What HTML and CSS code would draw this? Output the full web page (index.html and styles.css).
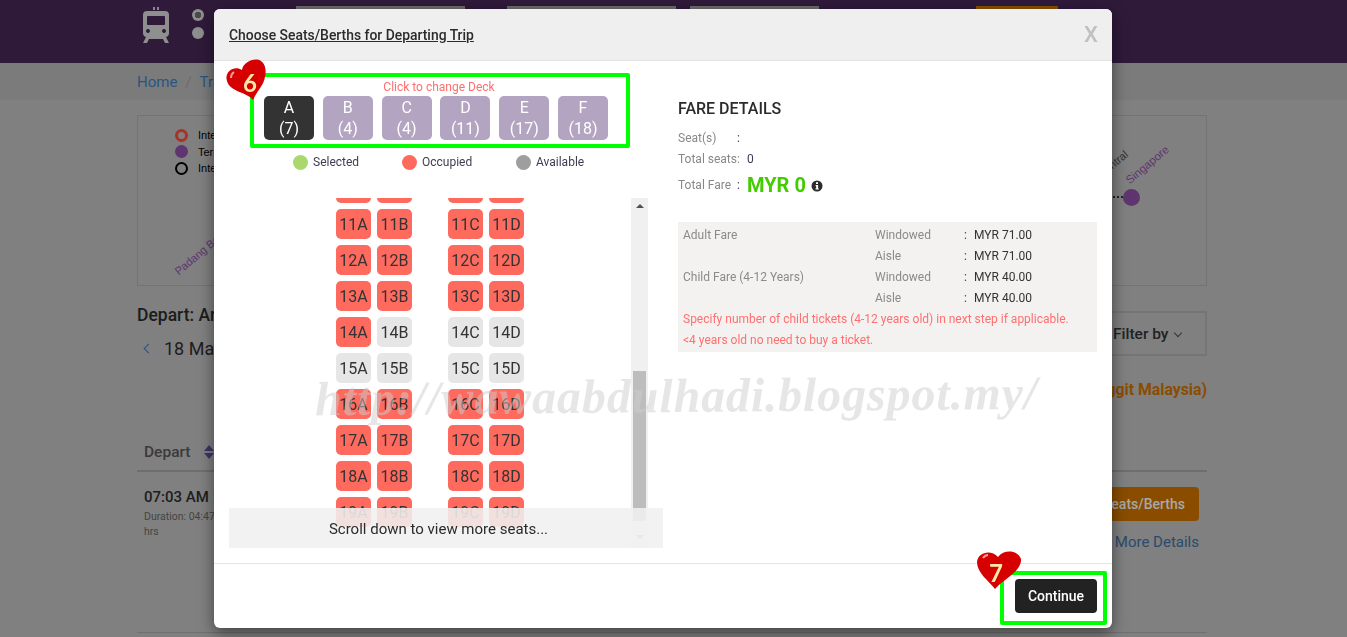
FILE: index.html
```html
<!DOCTYPE html>
<html lang="en">
<head>
<meta charset="utf-8">
<title>Choose Seats/Berths</title>
<link rel="stylesheet" href="styles.css">
</head>
<body>
<header class="topbar">
  <svg class="train" viewBox="0 0 30 38" width="30" height="38"><path d="M12 1h2v3h-2zM16 1h2v3h-2z" fill="#8a8a8a"/><path fill="#8f8f8f" fill-rule="evenodd" d="M6 5h18q4 0 4 4v18q0 3-3 4l3 6h-4l-2-4H8l-2 4H2l3-6q-3-1-3-4V9q0-4 4-4zm1 5q-1 0-1 1v7q0 1 1 1h16q1 0 1-1v-7q0-1-1-1zm0 13a2 2 0 1 0 .01 0zm16 0a2 2 0 1 0 .01 0z"/></svg>
  <div class="radios"><span class="radio radio-on"></span><span class="radio"></span></div>
  <span class="field field-a"></span>
  <span class="field field-b"></span>
  <span class="field field-c"></span>
  <span class="field field-go"></span>
</header>
<nav class="crumbs"><a>Home</a><i>/</i><a>Trains</a></nav>
<main class="page">
  <section class="map">
    <ul class="map-legend">
      <li><span class="mk mk-red"></span>Interchange</li>
      <li><span class="mk mk-purple"></span>Terminal</li>
      <li><span class="mk mk-black"></span>Intermediate</li>
    </ul>
    <span class="stn stn-padang">Padang Besar</span>
    <span class="stn stn-central">Central</span>
    <span class="stn stn-sing">Singapore</span>
    <span class="map-dots"></span>
    <span class="map-node"></span>
  </section>
  <section class="depart-bar">
    <div>
      <h2 class="depart-title">Depart: Arau to Singapore</h2>
      <div class="date"><span class="chev-left"></span>18 May</div>
    </div>
    <div class="filter">Filter by<span class="chev-down"></span></div>
  </section>
  <p class="fare-note">Fare (Ringgit Malaysia)</p>
  <div class="thead">Depart<svg class="sort" viewBox="0 0 10 14" width="10" height="14"><path d="M5 0l5 6H0zM5 14l5-6H0z" fill="#3d3566"/></svg></div>
  <div class="trow">
    <div class="tleft">
      <div class="time">07:03 AM</div>
      <div class="dur">Duration: 04:47<br>hrs</div>
    </div>
    <div class="tright">
      <a class="seats-btn">Choose Seats/Berths</a>
      <a class="more">More Details</a>
    </div>
  </div>
</main>

<div class="modal">
  <div class="modal-head">
    <h4 class="modal-title">Choose Seats/Berths for Departing Trip</h4>
    <span class="close">X</span>
  </div>
  <div class="modal-body">
    <div class="col-seats">
      <div class="deck-panel">
        <p class="deck-hint">Click to change Deck</p>
        <div class="decks">
          <button class="deck deck-on">A<br>(7)</button>
          <button class="deck">B<br>(4)</button>
          <button class="deck">C<br>(4)</button>
          <button class="deck">D<br>(11)</button>
          <button class="deck">E<br>(17)</button>
          <button class="deck">F<br>(18)</button>
        </div>
        <div class="legend">
          <span class="lg lg-sel">Selected</span>
          <span class="lg lg-occ">Occupied</span>
          <span class="lg lg-av">Available</span>
        </div>
      </div>
      <div class="seat-area">
        <div class="seat-view">
          <div class="seat-list">
            <div class="row"><b class="seat occ">10A</b><b class="seat occ">10B</b><b class="seat occ aisle">10C</b><b class="seat occ">10D</b></div>
            <div class="row"><b class="seat occ">11A</b><b class="seat occ">11B</b><b class="seat occ aisle">11C</b><b class="seat occ">11D</b></div>
            <div class="row"><b class="seat occ">12A</b><b class="seat occ">12B</b><b class="seat occ aisle">12C</b><b class="seat occ">12D</b></div>
            <div class="row"><b class="seat occ">13A</b><b class="seat occ">13B</b><b class="seat occ aisle">13C</b><b class="seat occ">13D</b></div>
            <div class="row"><b class="seat occ">14A</b><b class="seat">14B</b><b class="seat aisle">14C</b><b class="seat">14D</b></div>
            <div class="row"><b class="seat">15A</b><b class="seat">15B</b><b class="seat aisle">15C</b><b class="seat">15D</b></div>
            <div class="row"><b class="seat occ">16A</b><b class="seat occ">16B</b><b class="seat occ aisle">16C</b><b class="seat occ">16D</b></div>
            <div class="row"><b class="seat occ">17A</b><b class="seat occ">17B</b><b class="seat occ aisle">17C</b><b class="seat occ">17D</b></div>
            <div class="row"><b class="seat occ">18A</b><b class="seat occ">18B</b><b class="seat occ aisle">18C</b><b class="seat occ">18D</b></div>
            <div class="row"><b class="seat occ">19A</b><b class="seat occ">19B</b><b class="seat occ aisle">19C</b><b class="seat occ">19D</b></div>
          </div>
        </div>
        <div class="scrollbar">
          <span class="sb-up"></span>
          <span class="sb-thumb"></span>
          <span class="sb-down"></span>
        </div>
        <div class="scroll-hint">Scroll down to view more seats...</div>
      </div>
    </div>
    <div class="col-fare">
      <h3 class="fare-title">FARE DETAILS</h3>
      <div class="kv"><span class="k">Seat(s)</span><span class="c">:</span></div>
      <div class="kv"><span class="k">Total seats:</span><span class="c"></span><span class="v">0</span></div>
      <div class="kv kv-total"><span class="k">Total Fare</span><span class="c">:</span><strong class="amount">MYR 0</strong>
        <svg class="info" viewBox="0 0 12 12" width="12" height="12"><circle cx="6" cy="6" r="5.5" fill="#2b2b2b"/><path d="M5 2.2h2v1.7H5zM4.6 5h2.5v3.4h.7v1.2H4.4V8.4h.8V6.200h-.6z" fill="#fff"/></svg>
      </div>
      <div class="fare-box">
        <div class="fr"><span class="f1">Adult Fare</span><span class="f2">Windowed</span><span class="f3">:</span><span class="f4">MYR 71.00</span></div>
        <div class="fr"><span class="f1"></span><span class="f2">Aisle</span><span class="f3">:</span><span class="f4">MYR 71.00</span></div>
        <div class="fr"><span class="f1">Child Fare (4-12 Years)</span><span class="f2">Windowed</span><span class="f3">:</span><span class="f4">MYR 40.00</span></div>
        <div class="fr"><span class="f1"></span><span class="f2">Aisle</span><span class="f3">:</span><span class="f4">MYR 40.00</span></div>
        <div class="fr fr-red">Specify number of child tickets (4-12 years old) in next step if applicable.</div>
        <div class="fr fr-red">&lt;4 years old no need to buy a ticket.</div>
      </div>
    </div>
  </div>
  <div class="modal-foot"><button class="continue">Continue</button></div>
</div>

<div class="mark mark-deck"></div>
<div class="mark mark-cont"></div>
<svg class="heart heart-6" viewBox="0 0 44 42" width="44" height="42"><path d="M28 41C22 33 5 33 2 22-1 13 9 6 17 11 18 3 30-2 36 2c7 5 5 17 1 24-3 5-7 10-9 15z" fill="#d60000"/><path d="M9 13q-3 2-3 6" stroke="#ff9a9a" stroke-width="2" fill="none"/><text x="25" y="33" class="heart-num">6</text></svg>
<svg class="heart heart-7" viewBox="0 0 46 42" width="46" height="42"><path d="M19 40C13 32 1 24 1 13 2 3 15 0 22 8 28 0 42 1 45 10c1 12-17 20-26 30z" fill="#d60000"/><path d="M7 9q2-3 5-3" stroke="#ff9a9a" stroke-width="2" fill="none"/><text x="20" y="33" class="heart-num">7</text></svg>
<div class="watermark">http://wawaabdulhadi.blogspot.my/</div>
</body>
</html>
```
FILE: styles.css
```css
* { box-sizing: border-box; }
html, body { margin: 0; height: 100%; }
body {
  width: 1347px; height: 637px; overflow: hidden;
  background: #808080; color: #1d1d1d;
  font-family: Roboto, "Liberation Sans", sans-serif;
}
/* page behind the dialog */
.topbar { height: 63px; background: #2f1a3a; display: flex; align-items: flex-start; padding-left: 141px; }
.train { margin-top: 6px; }
.radios { margin: 9px 0 0 21px; display: flex; flex-direction: column; gap: 6px; }
.radio { display: block; width: 12px; height: 12px; border-radius: 50%; background: #8e8e8e; }
.radio-on { background: radial-gradient(circle, #4a4a4a 0 3px, #8e8e8e 3.5px); }
.field { height: 12px; margin-top: 6px; background: #6c6c6c; }
.field-a { width: 169px; margin-left: 92px; }
.field-b { width: 169px; margin-left: 42px; }
.field-c { width: 129px; margin-left: 14px; }
.field-go { width: 82px; margin-left: 157px; background: #8a4d00; }
.crumbs { height: 37px; background: #7b7b7b; padding: 10px 0 0 137px; font-size: 15px; line-height: 18px; color: #285684; display: flex; gap: 8px; }
.crumbs i { color: #6c6c6c; font-style: normal; }
.page { margin: 0 140px 0 137px; width: 1070px; }
.map { position: relative; height: 171px; margin-top: 15px; border: 1px solid #747474; }
.map-legend { list-style: none; margin: 11px 0 0 37px; padding: 0; font: 11px/16.500px "Liberation Sans", sans-serif; color: #000; }
.map-legend li { display: flex; align-items: center; gap: 10px; }
.mk { width: 13px; height: 13px; border-radius: 50%; }
.mk-red { border: 3px solid #a83226; }
.mk-purple { background: #5f3570; }
.mk-black { border: 2px solid #000; }
.stn { position: absolute; font: 11px "Liberation Sans", sans-serif; white-space: nowrap; color: #5f3570; transform: rotate(-40deg); transform-origin: left bottom; }
.stn-padang { left: 42px; top: 149px; }
.stn-central { left: 965px; top: 52px; color: #333; }
.stn-sing { left: 993px; top: 58px; font-size: 11.500px; }
.map-dots { position: absolute; left: 975px; top: 80px; width: 10px; border-top: 2px dotted #222; }
.map-node { position: absolute; left: 985px; top: 73px; width: 17px; height: 17px; border-radius: 50%; background: #5f3570; }
.depart-bar { display: flex; justify-content: space-between; margin-top: 25px; height: 45px; }
.depart-title { margin: -5px 0 0; font-size: 17.500px; line-height: 19px; font-weight: 500; color: #1c1c1c; }
.date { margin-top: 13px; padding-left: 8px; display: flex; align-items: center; gap: 12px; font-size: 18px; line-height: 21px; }
.chev-left { width: 7px; height: 7px; border-left: 1.500px solid #2b4f7e; border-bottom: 1.500px solid #2b4f7e; transform: rotate(45deg); }
.filter { width: 200px; border: 2px solid #757575; padding: 1px 0 0 104px; display: flex; align-items: center; gap: 7px; font-size: 15.500px; font-weight: 500; color: #222; }
.chev-down { width: 6px; height: 6px; margin-top: -3px; border-right: 1px solid #333; border-bottom: 1px solid #333; transform: rotate(45deg); }
.fare-note { margin: 24px 0 0; height: 19px; text-align: right; font-size: 15.800px; line-height: 19px; font-weight: 700; color: #8a4d00; }
.thead { height: 73px; padding: 44px 0 0 7px; border-bottom: 2px solid #6e6e6e; display: flex; align-items: flex-start; gap: 13px; font-size: 15.500px; line-height: 19px; font-weight: 500; color: #3a3a3a; }
.sort { margin-top: 2px; }
.trow { height: 161px; border-bottom: 1px solid #707070; display: flex; justify-content: space-between; padding: 15px 8px 0 7px; }
.time { font-size: 15px; line-height: 20px; font-weight: 500; }
.dur { font-size: 10.500px; line-height: 15px; margin-top: 2px; color: #444; }
.tright { display: flex; flex-direction: column; align-items: flex-end; }
.seats-btn { height: 34px; width: 200px; background: #8a4d00; border-radius: 4px; color: #a8a8a8; font-size: 14px; font-weight: 500; line-height: 34px; text-align: right; padding-right: 14px; }
.more { margin-top: 12px; font-size: 15px; line-height: 18px; color: #2a4a6e; }
/* dialog */
.modal { position: fixed; left: 214px; top: 9px; width: 898px; height: 619px; background: #fff; border-radius: 6px; box-shadow: 0 5px 15px rgba(0,0,0,.5); display: flex; flex-direction: column; }
.modal-head { height: 52px; flex: none; background: #efefef; border-bottom: 1px solid #e2e2e2; border-radius: 6px 6px 0 0; display: flex; justify-content: space-between; align-items: center; padding: 0 15px; }
.modal-title { margin: 0; font-size: 13.900px; font-weight: 500; text-decoration: underline; color: #2b2b2b; }
.close { font-size: 22px; font-weight: 500; color: #c0c0c0; margin-right: -1px; }
.modal-body { height: 502px; flex: none; display: flex; }
.col-seats { width: 449px; margin-left: 15px; flex: none; }
.deck-panel { height: 137px; padding: 18px 0 0 35px; }
.deck-hint { margin: 0; width: 350px; text-align: center; font-size: 12px; line-height: 16px; color: #ff6f6f; }
.decks { display: flex; gap: 8.800px; margin-top: 1px; }
.deck { width: 50px; height: 44px; padding: 0; border: 0; border-radius: 5px; background: #b3a5c1; color: #fff; font: 16px/21px Roboto, sans-serif; }
.deck-on { background: #333; }
.legend { display: flex; margin: 14px 0 0 29px; font-size: 12px; line-height: 16px; color: #3d3d50; }
.lg { display: flex; align-items: center; gap: 5px; }
.lg::before { content: ""; width: 15px; height: 15px; border-radius: 50%; }
.lg-sel { width: 109px; } .lg-sel::before { background: #aad86f; }
.lg-occ { width: 114px; } .lg-occ::before { background: #ff6a5f; }
.lg-av::before { background: #9e9e9e; }
.seat-area { position: relative; height: 350px; display: flex; }
.seat-view { width: 402px; height: 350px; overflow: hidden; padding-left: 107px; }
.seat-list { margin-top: -25px; }
.row { display: flex; gap: 6px; margin-bottom: 6px; }
.seat { display: block; width: 35px; height: 30px; border-radius: 5px; background: #e6e6e6; color: #333; font-size: 16px; font-weight: 400; line-height: 31px; text-align: center; }
.occ { background: #ff6a5f; }
.aisle { margin-left: 30px; }
.scrollbar { width: 17px; height: 350px; background: #f0f0f0; display: flex; flex-direction: column; align-items: center; }
.sb-up { margin-top: 6px; border: 4px solid transparent; border-top: 0; border-bottom: 4px solid #505050; }
.sb-thumb { width: 13px; height: 150px; margin-top: 163px; background: #bdbdbd; }
.sb-down { margin-top: 14px; border: 4px solid transparent; border-bottom: 0; border-top: 4px solid #a0a0a0; }
.scroll-hint { position: absolute; left: 0; bottom: 0; width: 434px; height: 40px; padding-right: 15px; background: rgba(240,240,240,.88); text-align: center; font-size: 15px; line-height: 42px; color: #2b2b2b; }
.col-fare { width: 419px; }
.fare-title { margin: 38px 0 9px; font-size: 16px; line-height: 19px; font-weight: 500; color: #2b2b2b; }
.kv { display: flex; align-items: center; height: 21px; font-size: 12px; color: #888; }
.k { width: 59px; flex: none; white-space: nowrap; }
.c { width: 10px; flex: none; color: #55385f; }
.v { color: #3a3a55; }
.kv-total { height: 30px; margin-top: 1px; }
.amount { font-size: 20px; font-weight: 700; color: #44cc00; }
.info { margin-left: 5px; margin-top: 2px; }
.fare-box { margin-top: 22px; height: 130px; background: #f4f2f1; padding: 3px 5px 0; }
.fr { display: flex; height: 21px; line-height: 21px; font-size: 12px; color: #8a8a8a; }
.f1 { width: 192px; }
.f2 { width: 89px; }
.f3 { width: 10px; color: #444; }
.f4 { color: #333; }
.fr-red { color: #ff6f6f; }
.modal-foot { flex: 1; border-top: 1px solid #e5e5e5; display: flex; justify-content: flex-end; padding: 15px 15px 0 0; }
.continue { width: 82px; height: 34px; border: 0; border-radius: 4px; background: #222; color: #fff; font: 500 14px Roboto, sans-serif; }
/* annotations over the screenshot */
.mark { position: fixed; border: 4px solid #00ff00; border-radius: 2px; }
.mark-deck { left: 250px; top: 73px; width: 380px; height: 75px; }
.mark-cont { left: 1000px; top: 571px; width: 107px; height: 54px; }
.heart { position: fixed; }
.heart-6 { left: 225px; top: 59px; }
.heart-7 { left: 976px; top: 549px; }
.heart-num { font: 700 24px Lato, sans-serif; fill: #ffe9a8; text-anchor: middle; }
.watermark { position: fixed; left: 315px; top: 368px; white-space: nowrap; font: italic 700 48px "Liberation Serif", serif; letter-spacing: .9px; color: rgba(205,205,205,.5); transform: rotate(-.5deg); pointer-events: none; }
```
